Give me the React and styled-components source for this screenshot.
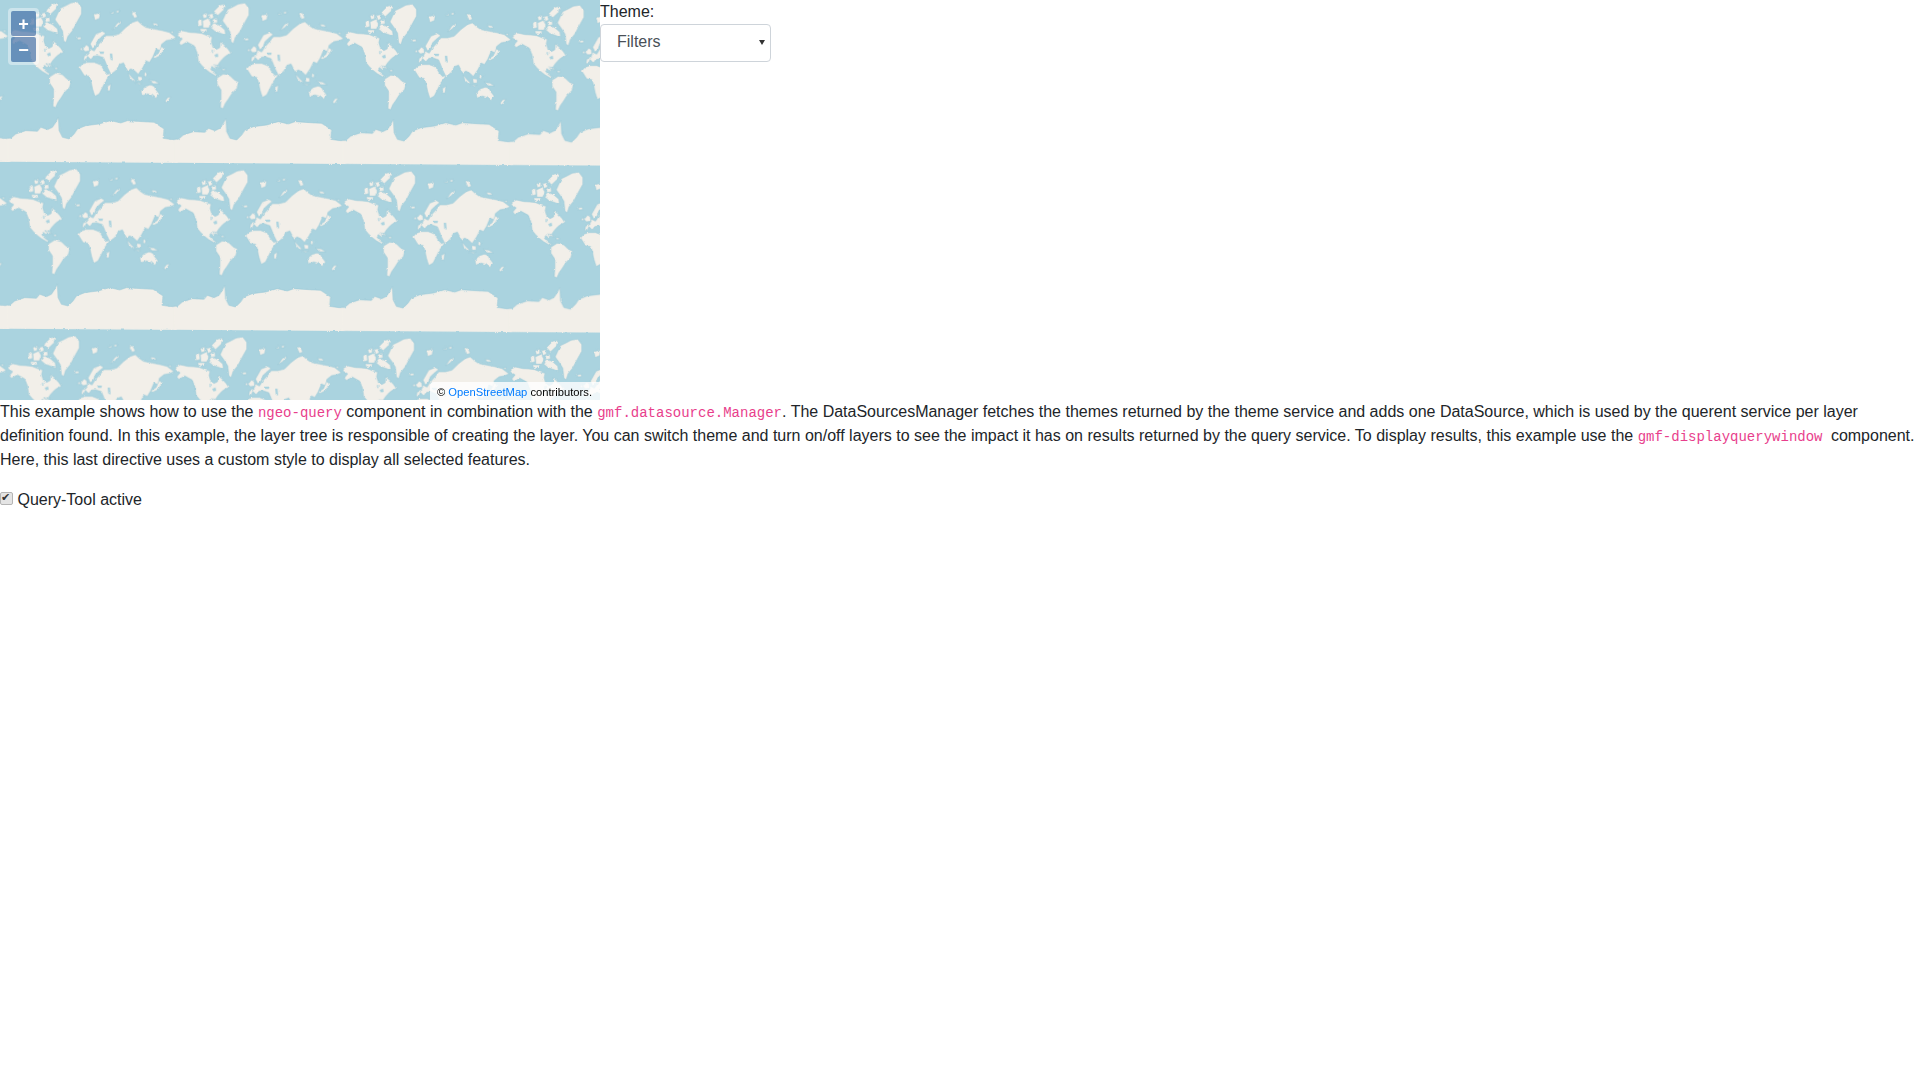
import React from 'react';
import styled, { createGlobalStyle } from 'styled-components';

const GlobalStyle = createGlobalStyle`
  body {
    margin: 0;
    font-family: "Liberation Sans", Arial, sans-serif;
    font-size: 16px;
    line-height: 1.5;
    color: #212529;
    background: #fff;
  }
`;

// coastlines, traced at 3x with x = 175 + px / 3 and y = py / 3
const LAND = [
  // north america
  'M8 100 L22 92 L45 97 L62 98 L80 100 L100 108 L112 111 L109 124 L114 142 L124 148 L134 143 L136 125 L146 133 L160 148 L168 160 L157 165 L147 172 L136 184 L128 196 L118 205 L111 199 L106 206 L114 216 L128 226 L122 228 L105 218 L92 208 L80 196 L70 184 L66 158 L58 138 L36 126 L18 136 L12 128 L22 116 L8 108 Z',
  // south america
  'M126 234 L145 222 L165 227 L178 240 L191 246 L186 265 L171 280 L161 296 L151 310 L144 326 L136 322 L138 296 L138 270 L126 252 Z',
  // greenland
  'M142 62 L150 45 L158 28 L175 20 L190 12 L210 9 L222 25 L222 45 L208 70 L195 95 L181 112 L175 131 L168 125 L165 96 L155 80 Z',
  // arctic islands
  'M116 34 L135 15 L150 12 L146 30 L128 47 Z',
  'M106 82 L116 68 L134 76 L150 90 L152 106 L138 100 L120 94 Z',
  'M82 62 L100 54 L108 68 L102 84 L84 84 Z',
  'M68 66 L80 56 L82 76 L70 80 Z',
  'M98 44 L114 40 L116 54 L104 58 Z',
  'M82 44 L96 38 L96 52 L86 56 Z',
  'M112 58 L126 54 L128 68 L114 70 Z',
  'M74 86 L96 86 L96 96 L78 96 Z',
  'M208 116 L220 114 L221 121 L210 122 Z',
  'M115 195 L125 195 L137 203 L124 201 Z',
  'M142 206 L150 206 L150 211 L142 211 Z',
  // scandinavia, britain, ireland
  'M248 135 L265 105 L285 97 L295 103 L280 115 L270 125 L265 140 L255 150 Z',
  'M226 150 L236 138 L244 142 L246 156 L232 158 Z',
  'M218 148 L224 146 L224 154 L218 154 Z',
  // africa
  'M215 206 L225 195 L240 190 L260 190 L280 198 L290 215 L300 226 L312 222 L295 245 L285 265 L275 285 L262 292 L255 270 L250 245 L245 232 L230 230 Z',
  // eurasia
  'M228 184 L230 171 L242 167 L248 150 L260 156 L270 140 L284 125 L295 110 L315 110 L335 105 L355 85 L375 70 L390 65 L400 75 L415 85 L440 90 L465 95 L485 100 L506 116 L492 122 L476 125 L462 136 L460 156 L446 150 L436 174 L426 190 L416 186 L406 206 L392 226 L382 216 L370 210 L360 216 L348 192 L336 196 L326 214 L310 226 L300 206 L293 188 L288 176 L270 170 L258 172 L250 182 L240 172 L235 184 Z',
  // islands east of africa, australia and the pacific rim
  'M300 262 L310 255 L308 275 L300 276 Z',
  'M400 275 L415 262 L430 258 L440 262 L445 272 L455 285 L445 298 L435 290 L420 285 L405 290 Z',
  'M362 222 L372 234 L384 246 L378 248 L366 236 Z',
  'M390 232 L404 234 L404 246 L392 246 Z',
  'M384 250 L404 254 L396 256 Z',
  'M412 218 L418 224 L416 236 L410 228 Z',
  'M424 244 L442 246 L456 254 L438 254 Z',
  'M480 296 L490 294 L478 312 L473 306 Z',
  'M462 142 L470 150 L458 170 L442 178 L436 174 L452 164 Z',
  'M258 46 L278 42 L276 58 L262 64 Z',
  'M310 40 L320 38 L318 44 L310 44 Z',
  'M326 36 L334 34 L334 41 L326 41 Z',
  'M316 92 L328 74 L340 66 L340 72 L328 84 Z',
  'M372 40 L382 38 L390 54 L380 58 Z',
  'M434 72 L448 74 L454 80 L440 80 Z',
  'M488 98 L498 98 L496 104 Z',
];

// water inside the land shapes
const WATER = [
  'M118 165 L128 160 L130 170 L122 172 Z',
  'M110 150 L114 150 L114 156 L110 156 Z',
  'M307 164 L314 164 L316 184 L309 182 Z',
  'M276 158 L290 158 L288 165 L278 165 Z',
  'M288 190 L294 190 L306 222 L301 220 Z',
  'M424 220 L430 222 L430 226 L424 226 Z',
];

// antarctica, with x = 170 + px / 3 and y = 100 + py / 3
const ICE_EDGE =
  'M15 118 L25 118 L40 105 L70 95 L105 97 L115 85 L135 92 L150 85 L160 70 L168 55 L170 95 L180 115 L200 120 L215 105 L225 90 L250 80 L290 75 L325 65 L355 72 L375 65 L420 68 L455 70 L485 90 L482 118 L510 122 L526 122';

const COLUMNS = [-2, -1, 0, 1, 2];
const ROWS = [-1, 0, 1, 2];

function WorldTile({ col, row }) {
  const dx = col * 167.5 - row * 1.1;
  const dy = row * 167 + col * 1.1;
  return (
    <g transform={`translate(${dx} ${dy}) translate(175 0) scale(0.3333)`}>
      <g filter="url(#coast)">
        <g transform="translate(-15 300)">
          <path d={`${ICE_EDGE} L526 192 L15 188 Z`} fill="#f2efe9" />
          <path d={ICE_EDGE} fill="none" stroke="#97c6d6" strokeWidth="1.6" />
        </g>
        {LAND.map((d) => (
          <path
            key={d}
            d={d}
            fill="#f2efe9"
            stroke="#97c6d6"
            strokeWidth="1.6"
            strokeLinejoin="round"
          />
        ))}
        {WATER.map((d) => (
          <path key={d} d={d} fill="#aad3df" />
        ))}
      </g>
    </g>
  );
}

function WorldMap() {
  return (
    <MapDrawing viewBox="0 0 600 400">
      <defs>
        <filter
          id="coast"
          filterUnits="userSpaceOnUse"
          x="-60"
          y="-20"
          width="640"
          height="520"
        >
          <feTurbulence type="fractalNoise" baseFrequency="0.09" numOctaves="2" seed="4" />
          <feDisplacementMap in="SourceGraphic" scale="7" xChannelSelector="R" yChannelSelector="G" />
        </filter>
      </defs>
      {ROWS.map((row) =>
        COLUMNS.map((col) => <WorldTile key={`${row}/${col}`} col={col} row={row} />)
      )}
    </MapDrawing>
  );
}

export default function App() {
  return (
    <>
      <GlobalStyle />
      <TopRow>
        <MapFrame>
          <WorldMap />
          <ZoomControl>
            <ZoomButton type="button">+</ZoomButton>
            <ZoomButton type="button">−</ZoomButton>
          </ZoomControl>
          <Attribution>
            © <a href="#osm">OpenStreetMap</a> contributors.
          </Attribution>
        </MapFrame>
        <div>
          <ThemeLabel htmlFor="theme">Theme:</ThemeLabel>
          <SelectWrap>
            <ThemeSelect id="theme" defaultValue="Filters">
              <option>Filters</option>
            </ThemeSelect>
          </SelectWrap>
        </div>
      </TopRow>
      <Description>
        This example shows how to use the <code>ngeo-query</code> component in combination with the{' '}
        <code>gmf.datasource.Manager</code>. The DataSourcesManager fetches the themes returned by
        the theme service and adds one DataSource, which is used by the querent service per layer
        definition found. In this example, the layer tree is responsible of creating the layer. You
        can switch theme and turn on/off layers to see the impact it has on results returned by the
        query service. To display results, this example use the{' '}
        <code>gmf-displayquerywindow </code>
        component. Here, this last directive uses a custom style to display all selected features.
      </Description>
      <ToolToggle>
        <ToolCheck type="checkbox" defaultChecked /> Query-Tool active
      </ToolToggle>
    </>
  );
}

const TopRow = styled.div`
  display: flex;
  align-items: flex-start;
`;

const MapFrame = styled.div`
  position: relative;
  flex: none;
  width: 600px;
  height: 400px;
  overflow: hidden;
  background: #aad3df;
`;

const MapDrawing = styled.svg`
  display: block;
  width: 600px;
  height: 400px;
  filter: blur(0.35px);
`;

const ZoomControl = styled.div`
  position: absolute;
  top: 8px;
  left: 8px;
  display: flex;
  flex-direction: column;
  gap: 1px;
  padding: 3px;
  border-radius: 4px;
  background: rgba(255, 255, 255, 0.4);
`;

const ZoomButton = styled.button`
  display: flex;
  align-items: center;
  justify-content: center;
  width: 25px;
  height: 25px;
  margin: 0;
  padding: 0;
  border: none;
  border-radius: 2px;
  background: rgba(0, 60, 136, 0.5);
  color: #fff;
  font-family: "Liberation Sans", Arial, sans-serif;
  font-size: 18px;
  font-weight: 700;
  line-height: 1;
`;

const Attribution = styled.div`
  position: absolute;
  right: 0;
  bottom: 0;
  height: 18px;
  padding: 2px 8px 0 7px;
  box-sizing: border-box;
  border-radius: 4px 0 0 0;
  background: rgba(255, 255, 255, 0.8);
  color: #000;
  font-size: 11.2px;
  line-height: 16px;

  a {
    color: #007bff;
    text-decoration: none;
  }
`;

const ThemeLabel = styled.label`
  display: block;
`;

const SelectWrap = styled.div`
  position: relative;
  width: 171px;

  &::after {
    content: '';
    position: absolute;
    top: 16px;
    right: 6px;
    border-style: solid;
    border-width: 5px 3px 0;
    border-color: #333 transparent transparent;
    pointer-events: none;
  }
`;

const ThemeSelect = styled.select`
  appearance: none;
  display: block;
  box-sizing: border-box;
  width: 171px;
  height: 38px;
  padding: 5px 12px 7px 16px;
  border: 1px solid #ced4da;
  border-radius: 4px;
  background-color: #fff;
  color: #495057;
  font-family: inherit;
  font-size: 16px;
  line-height: 1.5;
`;

const Description = styled.p`
  margin: 0 0 16px;

  code {
    color: #e83e8c;
    font-family: "Liberation Mono", "Courier New", monospace;
    font-size: 14px;
  }
`;

const ToolToggle = styled.label`
  display: inline-block;
`;

const ToolCheck = styled.input`
  appearance: none;
  position: relative;
  display: inline-block;
  box-sizing: border-box;
  width: 13px;
  height: 13px;
  margin: 0;
  border: 1px solid #b5b5b5;
  border-radius: 2px;
  background: #e4e4e4;
  vertical-align: 0;

  &::after {
    content: '✔';
    position: absolute;
    top: -1px;
    left: 0;
    color: #333;
    font-family: "DejaVu Sans", sans-serif;
    font-size: 11px;
    line-height: 12px;
  }
`;
